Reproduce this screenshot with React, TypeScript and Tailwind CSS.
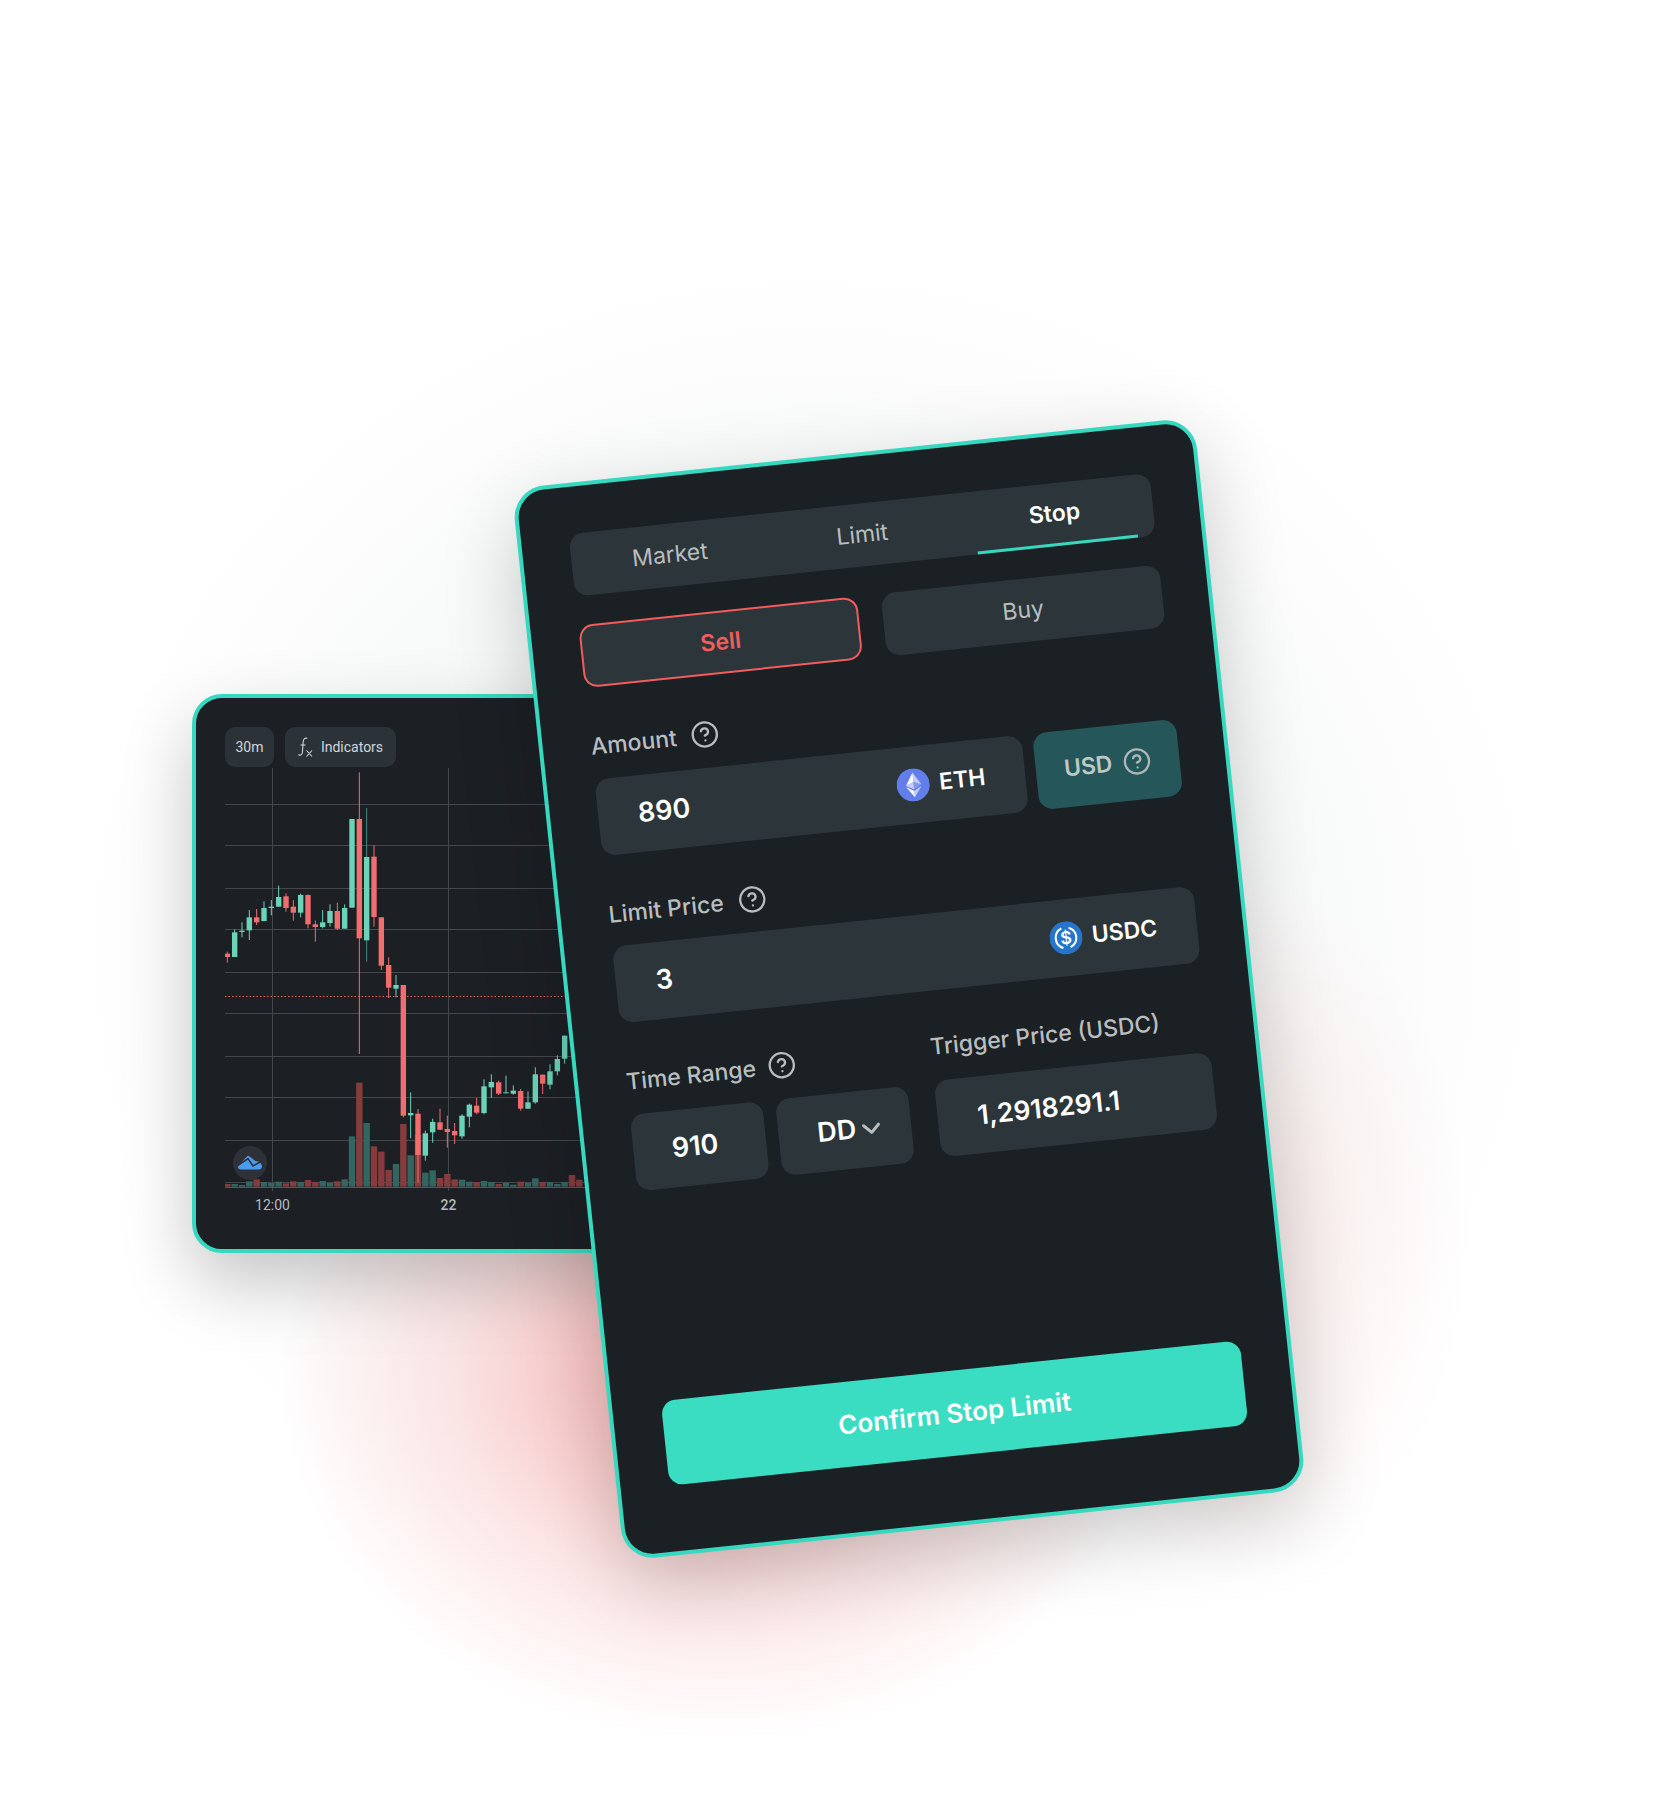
import { ChevronDown, CircleHelp } from "lucide-react";

type C = [number, number, number, number, number];
const raw: [number, number, number, number, number, number][] = [
  [1, 815, 821, 831, 848, 0], [1, 748, 757, 831, 831, 1], [1, 727, 752, 756, 772, 1], [1, 690, 712, 751, 780, 1],
  [1, 687, 712, 727, 735, 0], [1, 664, 684, 723, 724, 1], [1, 660, 680, 684, 706, 1], [1, 617, 651, 680, 680, 1],
  [1, 640, 649, 684, 695, 0], [1, 660, 680, 698, 722, 0], [1, 641, 645, 698, 712, 1], [1, 643, 645, 733, 745, 0],
  [1, 722, 733, 741, 785, 0], [1, 690, 727, 741, 745, 1], [1, 673, 693, 729, 740, 1], [1, 668, 693, 746, 750, 0],
  [1, 673, 684, 746, 746, 1], [1, 417, 417, 683, 683, 1], [1, 277, 417, 775, 1122, 0], [1, 384, 531, 781, 845, 1],
  [1, 496, 530, 711, 740, 0], [1, 712, 712, 857, 870, 0], [1, 832, 855, 923, 954, 0],
  [2, 45, 75, 86, 112, 1], [2, 75, 75, 467, 472, 0], [2, 397, 459, 466, 535, 1], [2, 447, 461, 585, 668, 0],
  [2, 512, 520, 587, 602, 1], [2, 476, 486, 517, 548, 1], [2, 446, 487, 509, 510, 0], [2, 467, 507, 516, 563, 0],
  [2, 489, 513, 526, 552, 0], [2, 463, 467, 529, 536, 1], [2, 431, 434, 470, 502, 1], [2, 414, 437, 458, 463, 0],
  [2, 358, 379, 459, 463, 1], [2, 343, 366, 382, 414, 1], [2, 362, 367, 401, 405, 0], [2, 347, 397, 399, 399, 1],
  [2, 376, 392, 401, 404, 1], [2, 387, 393, 446, 452, 0], [2, 394, 427, 446, 447, 1], [2, 322, 343, 427, 431, 1],
  [2, 344, 344, 371, 402, 0], [2, 313, 334, 374, 388, 1], [2, 286, 297, 334, 346, 1], [2, 227, 227, 296, 311, 1],
];
const candles = raw.map(([zone, a, b, c, d, up]) => {
  const f = (v: number) => (zone === 1 ? v / 3 - 87 : v / 3 + 193);
  return [f(a), f(b), f(c), f(d), up] as C;
});
const vols: [number, number][] = [
  [672, 0], [672, 1], [675, 1], [664, 1], [658, 0], [666, 1], [669, 1], [665, 1], [670, 0], [664, 0], [666, 1], [660, 0],
  [666, 0], [663, 1], [669, 1], [664, 0], [658, 1], [529, 1], [368, 0], [489, 1], [559, 0], [575, 0], [630, 0], [612, 1],
  [492, 0], [586, 1], [525, 0], [638, 1], [631, 1], [654, 0], [642, 0], [658, 0], [659, 1], [665, 1], [666, 0], [663, 1],
  [666, 1], [672, 0], [669, 1], [674, 1], [665, 0], [669, 1], [655, 1], [666, 0], [666, 1], [672, 1], [666, 1], [645, 0], [659, 0],
];
const cx = (i: number) => (142 + 22 * i) / 3 - 45;
const hLines = [37, 78, 121, 162, 205, 246, 289, 330, 373, 415];

function Chart() {
  return (
    <svg width="400" height="482" className="block" style={{ fontFamily: "Roboto, sans-serif" }}>
      {hLines.map((y) => (
        <line key={y} x1="0" x2="400" y1={y + 0.5} y2={y + 0.5} stroke="#44474c" strokeWidth="1" />
      ))}
      <line x1="47.5" x2="47.5" y1="1" y2="424" stroke="#44474c" />
      <line x1="223.5" x2="223.5" y1="1" y2="424" stroke="#44474c" />
      <line x1="0" x2="400" y1="229.5" y2="229.5" stroke="#e5605c" strokeDasharray="1.5 2" />
      {vols.map(([t, up], i) => (
        <rect key={i} x={cx(i) - 3.2} y={t / 3 + 193} width="6.4" height={(680 - t) / 3} fill={up ? "#336660" : "#843c3c"} />
      ))}
      <line x1="0" x2="400" y1="420.5" y2="420.5" stroke="#55585d" />
      {candles.map(([a, b, c, d, up], i) => {
        const col = up ? "#6bd4b8" : "#f26d6d";
        return (
          <g key={i}>
            <line x1={cx(i)} x2={cx(i)} y1={a} y2={d} stroke={i === 19 ? "#3f8f80" : col} strokeWidth="1" />
            <rect x={cx(i) - 2.7} y={b} width="5.4" height={Math.max(c - b, 1)} fill={col} />
          </g>
        );
      })}
      <circle cx="25" cy="396" r="17" fill="#2e3138" />
      <path d="M16 402.500c-2 0-3.500-1.500-3-3.500l.5-1L23 388.500l5 3.500c1 1 2 2 3 2 3 0 6 3 6 5.500 0 2-1.500 3-3 3z" fill="#4a9cf0" />
      <path d="M12 399l11-7.500 5 7.500 8-4.500" fill="none" stroke="#2e3138" strokeWidth="1.600" />
      <text x="47.500" y="443" textAnchor="middle" fontSize="14" fill="#b6b9c0">12:00</text>
      <text x="223.500" y="443" textAnchor="middle" fontSize="14" fontWeight="500" fill="#b6b9c0">22</text>
    </svg>
  );
}

function Help({ size = 29, className = "mb-[2px] text-[#b9bdbe]" }: { size?: number; className?: string }) {
  return <CircleHelp size={size} strokeWidth={1.9} className={className} />;
}

function Eth() {
  return (
    <svg width="33" height="33" viewBox="0 0 32 32">
      <circle cx="16" cy="16" r="16" fill="#627EEA" />
      <path fill="#fff" fillOpacity=".602" d="M16.498 4v8.870l7.497 3.350z" />
      <path fill="#fff" d="M16.498 4L9 16.220l7.498-3.350z" />
      <path fill="#fff" fillOpacity=".602" d="M16.498 21.968v6.027L24 17.616z" />
      <path fill="#fff" d="M16.498 27.995v-6.028L9 17.616z" />
      <path fill="#fff" fillOpacity=".2" d="M16.498 20.573l7.497-4.353-7.497-3.348z" />
      <path fill="#fff" fillOpacity=".602" d="M9 16.220l7.498 4.353v-7.701z" />
    </svg>
  );
}

function Usdc() {
  return (
    <svg width="33" height="33" viewBox="0 0 32 32">
      <circle cx="16" cy="16" r="16" fill="#2775CA" />
      <path d="M12.500 6.500a10.200 10.200 0 0 0 0 19M19.500 6.500a10.200 10.200 0 0 1 0 19" fill="none" stroke="#fff" strokeWidth="2" />
      <text x="16" y="22" textAnchor="middle" fontSize="17" fontWeight="600" fill="#fff" style={{ fontFamily: "Inter, sans-serif" }}>$</text>
    </svg>
  );
}

const panel = "rounded-[14px] bg-[#2c363a]";

export default function App() {
  return (
    <div className="relative h-[1804px] w-[1660px] overflow-hidden bg-white font-['Inter',sans-serif]">
      {/* soft background glows */}
      <div className="absolute left-[60px] top-[250px] h-[1400px] w-[1500px] rounded-full bg-[radial-gradient(closest-side,rgba(195,210,205,0.22),rgba(195,210,205,0.12)_65%,transparent)]" />
      <div className="absolute left-[280px] top-[1010px] h-[730px] w-[880px] rounded-full bg-[radial-gradient(closest-side,rgba(244,90,90,0.5),rgba(244,90,90,0.15)_60%,transparent)]" />
      <div className="absolute left-[1010px] top-[880px] h-[700px] w-[460px] rounded-full bg-[radial-gradient(closest-side,rgba(240,130,120,0.14),transparent)]" />

      {/* chart window */}
      <div className="absolute left-[192px] top-[694px] h-[559px] w-[448px] overflow-hidden rounded-[30px] border-4 border-[#36d8bf] bg-[#1c1f24] pl-[29px] pt-[29px] shadow-[0_30px_70px_rgba(0,0,0,0.22)]">
        <div className="flex h-[40px] gap-[11px] font-['Roboto',sans-serif] text-[14px] text-[#d1d4dc]">
          <div className="flex w-[49px] items-center justify-center rounded-[10px] bg-[#2c3338]">30m</div>
          <div className="flex w-[111px] items-center justify-center gap-[8px] rounded-[10px] bg-[#2c3338]">
            <svg width="15" height="20" viewBox="0 0 15 20" fill="none" stroke="#d1d4dc" strokeWidth="1.100">
              <path d="M.5 17.500c1.500 1.300 3.300.8 3.800-1.500.5-3 .5-9 1-12 .4-2.300 2-3.300 4-2.700M2.500 8H7.500M8.500 13.500l5.500 6M14 13.500l-5.500 6" />
            </svg>
            <span>Indicators</span>
          </div>
        </div>
        <Chart />
      </div>

      {/* order ticket */}
      <div className="absolute left-[566px] top-[450px] flex h-[1078px] w-[686px] rotate-[-6deg] flex-col rounded-[32px] border-4 border-[#36d8bf] bg-[#1a2024] pb-[66.500px] pl-[48px] pr-[46px] pt-[47px] shadow-[0_25px_80px_rgba(0,0,0,0.2)]">
        <div className={`${panel} grid h-[63px] grid-cols-3 px-[2px] text-[23px] text-[#b9bdbe]`}>
          <div className="flex items-center justify-center pb-[1px]">Market</div>
          <div className="flex items-center justify-center pb-[1px]">Limit</div>
          <div className="flex flex-col items-center">
            <div className="flex flex-1 items-center font-semibold text-white">Stop</div>
            <div className="h-[3.5px] w-[161px] bg-[#36d8bf]" />
          </div>
        </div>

        <div className="mt-[29px] grid h-[63px] grid-cols-2 gap-[24px] text-[23px]">
          <div className={`${panel} flex items-center justify-center border-2 border-[#f25c5c] font-semibold text-[#f25c5c]`}>Sell</div>
          <div className={`${panel} flex items-center justify-center text-[#b9bdbe]`}>Buy</div>
        </div>

        <div className="mt-[45px] flex h-[28px] items-center gap-[14px] text-[23px] font-medium text-[#b9bdbe]">
          Amount <Help />
        </div>
        <div className="mt-[19px] flex h-[77px] gap-[11px]">
          <div className={`${panel} flex flex-1 items-center justify-between px-[40px]`}>
            <span className="text-[27px] font-semibold text-white">890</span>
            <span className="flex items-center gap-[10px] text-[23px] font-semibold text-white"><Eth />ETH</span>
          </div>
          <div className="flex w-[144px] items-center justify-center gap-[10px] rounded-[14px] bg-[#25575a] text-[23px] font-semibold text-[#bfc7c7]">
            USD <Help size={29} className="text-[#aeb8b8]" />
          </div>
        </div>

        <div className="mt-[45px] flex h-[28px] items-center gap-[14px] text-[23px] font-medium text-[#b9bdbe]">
          Limit Price <Help />
        </div>
        <div className={`${panel} mt-[18px] flex h-[77px] items-center justify-between px-[40px]`}>
          <span className="text-[27px] font-semibold text-white">3</span>
          <span className="flex items-center gap-[10px] text-[23px] font-semibold text-white"><Usdc />USDC</span>
        </div>

        <div className="mt-[42px] grid grid-cols-[283px_1fr] gap-[23px]">
          <div>
            <div className="mt-[3px] flex h-[28px] items-center gap-[12px] text-[23px] font-medium text-[#b9bdbe]">
              Time Range <Help />
            </div>
            <div className="mt-[19px] flex h-[77px] gap-[13px]">
              <div className={`${panel} flex w-[133px] items-center justify-center pr-[9px] text-[27px] font-semibold text-white`}>910</div>
              <div className={`${panel} flex w-[133px] items-center justify-center gap-[0.5px] pl-[14px] text-[27px] font-semibold text-white`}>
                DD <ChevronDown size={30} strokeWidth={2.4} className="text-[#b9bdbe]" />
              </div>
            </div>
          </div>
          <div>
            <div className="flex h-[28px] items-center text-[23px] font-medium text-[#b9bdbe]">Trigger Price (USDC)</div>
            <div className={`${panel} mt-[20px] flex h-[77px] items-center px-[40px] text-[26.500px] font-semibold text-white`}>1,2918291.1</div>
          </div>
        </div>

        <div className="ml-[1px] mr-[1px] mt-auto flex h-[85px] items-center justify-center rounded-[14px] bg-[#3adcc2] text-[26px] font-semibold text-white">
          Confirm Stop Limit
        </div>
      </div>
    </div>
  );
}
